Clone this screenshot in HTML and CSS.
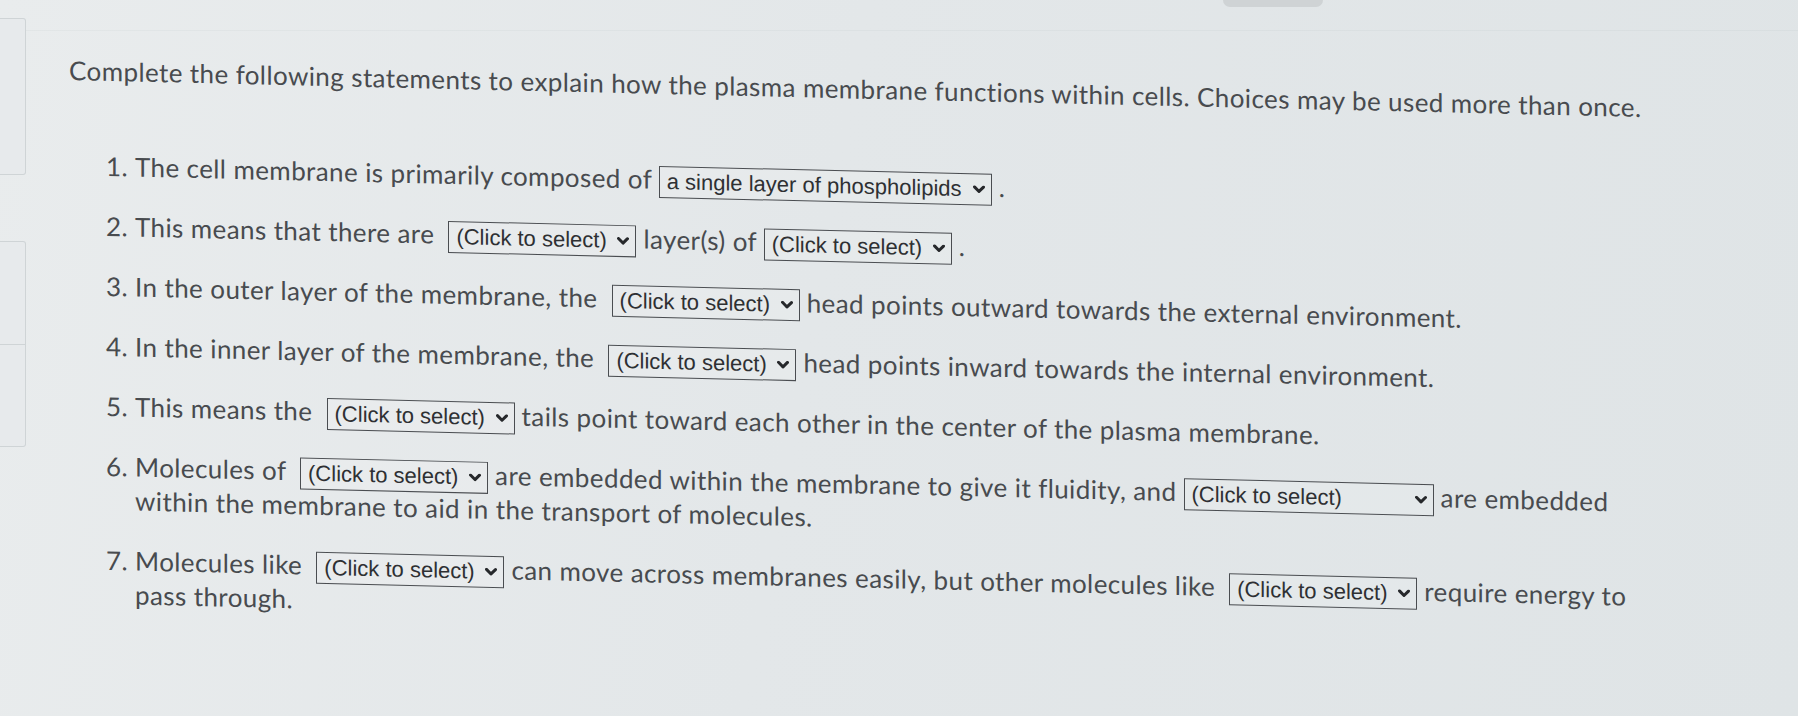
FILE: index.html
```html
<!DOCTYPE html>
<html lang="en">
<head>
<meta charset="utf-8">
<title>Plasma membrane statements</title>
<link rel="stylesheet" href="styles.css">
</head>
<body>
<div class="page">
  <aside class="sidebar">
    <div class="side-box side-box-top"></div>
    <div class="side-box side-box-mid">
      <div class="side-cell"></div>
      <div class="side-cell"></div>
    </div>
  </aside>
  <main class="main">
    <div class="topbar"><div class="tab"></div></div>
    <section class="content">
      <p class="intro">Complete the following statements to explain how the plasma membrane functions within cells. Choices may be used more than once.</p>
      <ol class="items">
        <li>The cell membrane is primarily composed of <span class="dd dd-long"><span>a single layer of phospholipids</span><svg class="chev" viewBox="0 0 12 8"><path d="M1.5 1.5 L6 6 L10.5 1.5"/></svg></span> .</li>
        <li>This means that there are &nbsp;<span class="dd"><span>(Click to select)</span><svg class="chev" viewBox="0 0 12 8"><path d="M1.5 1.5 L6 6 L10.5 1.5"/></svg></span> layer(s) of <span class="dd"><span>(Click to select)</span><svg class="chev" viewBox="0 0 12 8"><path d="M1.5 1.5 L6 6 L10.5 1.5"/></svg></span> .</li>
        <li>In the outer layer of the membrane, the &nbsp;<span class="dd"><span>(Click to select)</span><svg class="chev" viewBox="0 0 12 8"><path d="M1.5 1.5 L6 6 L10.5 1.5"/></svg></span> head points outward towards the external environment.</li>
        <li>In the inner layer of the membrane, the &nbsp;<span class="dd"><span>(Click to select)</span><svg class="chev" viewBox="0 0 12 8"><path d="M1.5 1.5 L6 6 L10.5 1.5"/></svg></span> head points inward towards the internal environment.</li>
        <li>This means the &nbsp;<span class="dd"><span>(Click to select)</span><svg class="chev" viewBox="0 0 12 8"><path d="M1.5 1.5 L6 6 L10.5 1.5"/></svg></span> tails point toward each other in the center of the plasma membrane.</li>
        <li>Molecules of &nbsp;<span class="dd"><span>(Click to select)</span><svg class="chev" viewBox="0 0 12 8"><path d="M1.5 1.5 L6 6 L10.5 1.5"/></svg></span> are embedded within the membrane to give it fluidity, and <span class="dd dd-wide"><span>(Click to select)</span><svg class="chev" viewBox="0 0 12 8"><path d="M1.5 1.5 L6 6 L10.5 1.5"/></svg></span> are embedded<br>within the membrane to aid in the transport of molecules.</li>
        <li>Molecules like &nbsp;<span class="dd"><span>(Click to select)</span><svg class="chev" viewBox="0 0 12 8"><path d="M1.5 1.5 L6 6 L10.5 1.5"/></svg></span> can move across membranes easily, but other molecules like &nbsp;<span class="dd"><span>(Click to select)</span><svg class="chev" viewBox="0 0 12 8"><path d="M1.5 1.5 L6 6 L10.5 1.5"/></svg></span> require energy to<br>pass through.</li>
      </ol>
    </section>
  </main>
</div>
</body>
</html>
```
FILE: styles.css
```css
html, body {
  margin: 0;
  padding: 0;
}
body {
  width: 1798px;
  height: 716px;
  overflow: hidden;
  background: linear-gradient(100deg, #e9eced 0%, #e3e7e9 45%, #dfe4e6 100%);
  font-family: "Lato", "Open Sans", sans-serif;
  color: #484b4f;
}
.page {
  display: flex;
  height: 716px;
}
.sidebar {
  width: 26px;
  flex: none;
  display: flex;
  flex-direction: column;
  padding-top: 18px;
  gap: 66px;
}
.side-box {
  border: 1px solid #cfd4d6;
  border-left: none;
  border-radius: 0 3px 3px 0;
  background: #e7eaec;
}
.side-box-top {
  height: 155px;
}
.side-box-mid {
  height: 204px;
  display: flex;
  flex-direction: column;
}
.side-cell {
  flex: 1;
}
.side-cell + .side-cell {
  border-top: 1px solid #cfd4d6;
}
.main {
  flex: 1;
  display: flex;
  flex-direction: column;
}
.topbar {
  height: 30px;
  border-bottom: 1px solid rgba(120, 130, 135, 0.06);
}
.tab {
  margin-left: 1197px;
  width: 100px;
  height: 7px;
  background: #cfd3d5;
  border-radius: 0 0 8px 8px;
}
.content {
  padding-left: 43px;
  transform: skewY(1.35deg);
  transform-origin: 0 0;
}
.intro {
  margin: 21px 0 61px 0;
  font-size: 26px;
  letter-spacing: 0.4px;
  line-height: 34px;
  white-space: nowrap;
}
.items {
  margin: 0;
  padding-left: 66px;
  font-size: 26px;
  letter-spacing: 0.4px;
  line-height: 34px;
}
.items li {
  margin-bottom: 26px;
  white-space: nowrap;
}
.dd {
  display: inline-flex;
  align-items: center;
  justify-content: space-between;
  box-sizing: border-box;
  width: 188px;
  height: 32px;
  margin: -6px 0;
  padding: 0 6px 0 7px;
  border: 1px solid #4a4d51;
  vertical-align: middle;
  font-family: "Liberation Sans", Arial, sans-serif;
  font-size: 22px;
  letter-spacing: 0;
  line-height: 1;
  color: #2e3033;
  background: rgba(255, 255, 255, 0.12);
}
.dd-long {
  width: 333px;
}
.dd-wide {
  width: 250px;
}
.chev {
  width: 12px;
  height: 8px;
  flex: none;
  fill: none;
  stroke: #26282b;
  stroke-width: 3;
  stroke-linecap: round;
  stroke-linejoin: round;
}
```
